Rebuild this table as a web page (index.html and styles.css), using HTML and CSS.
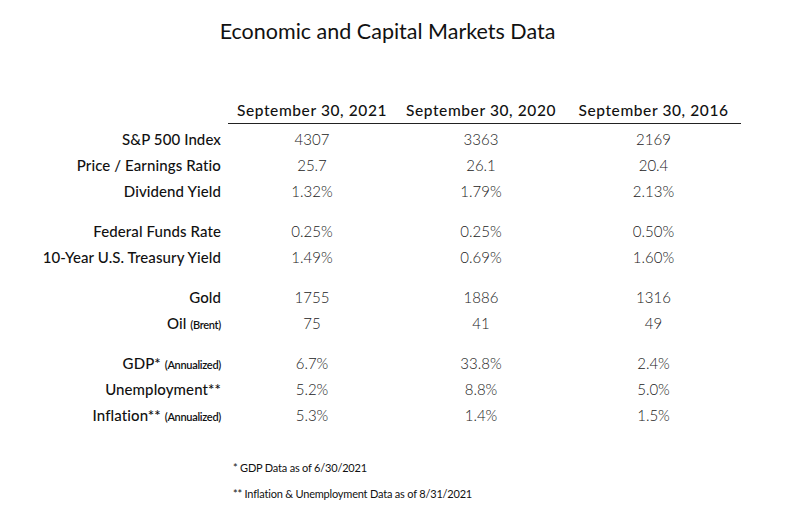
FILE: index.html
```html
<!DOCTYPE html>
<html>
<head>
<meta charset="utf-8">
<link rel="stylesheet" href="styles.css">
</head>
<body>
<div class="page">
  <h1 class="title">Economic and Capital Markets Data</h1>
  <div class="table">
    <div class="head-row">
      <div class="label-cell"></div>
      <div class="head-cells">
        <div class="col">September 30, 2021</div>
        <div class="col">September 30, 2020</div>
        <div class="col">September 30, 2016</div>
      </div>
    </div>
    <div class="group">
      <div class="row"><div class="label-cell">S&amp;P 500 Index</div><div class="col val">4307</div><div class="col val">3363</div><div class="col val">2169</div></div>
      <div class="row"><div class="label-cell">Price / Earnings Ratio</div><div class="col val">25.7</div><div class="col val">26.1</div><div class="col val">20.4</div></div>
      <div class="row"><div class="label-cell">Dividend Yield</div><div class="col val">1.32%</div><div class="col val">1.79%</div><div class="col val">2.13%</div></div>
    </div>
    <div class="group">
      <div class="row"><div class="label-cell">Federal Funds Rate</div><div class="col val">0.25%</div><div class="col val">0.25%</div><div class="col val">0.50%</div></div>
      <div class="row"><div class="label-cell">10-Year U.S. Treasury Yield</div><div class="col val">1.49%</div><div class="col val">0.69%</div><div class="col val">1.60%</div></div>
    </div>
    <div class="group">
      <div class="row"><div class="label-cell">Gold</div><div class="col val">1755</div><div class="col val">1886</div><div class="col val">1316</div></div>
      <div class="row"><div class="label-cell">Oil <span class="small">(Brent)</span></div><div class="col val">75</div><div class="col val">41</div><div class="col val">49</div></div>
    </div>
    <div class="group">
      <div class="row"><div class="label-cell">GDP* <span class="small">(Annualized)</span></div><div class="col val">6.7%</div><div class="col val">33.8%</div><div class="col val">2.4%</div></div>
      <div class="row"><div class="label-cell">Unemployment**</div><div class="col val">5.2%</div><div class="col val">8.8%</div><div class="col val">5.0%</div></div>
      <div class="row"><div class="label-cell">Inflation** <span class="small">(Annualized)</span></div><div class="col val">5.3%</div><div class="col val">1.4%</div><div class="col val">1.5%</div></div>
    </div>
  </div>
  <div class="notes">
    <p>* GDP Data as of 6/30/2021</p>
    <p>** Inflation &amp; Unemployment Data as of 8/31/2021</p>
  </div>
</div>
</body>
</html>
```
FILE: styles.css
```css
* { box-sizing: border-box; }
body {
  margin: 0;
  background: #fff;
  font-family: "Lato", "Noto Sans", sans-serif;
  color: #111;
}
.page {
  width: 789px;
  height: 532px;
  padding-top: 18px;
}
.title {
  margin: 0;
  text-align: center;
  font-size: 21.5px;
  font-weight: 400;
  line-height: 26px;
  padding-right: 14px;
  color: #111;
}
.table {
  margin-top: 55px;
  display: flex;
  flex-direction: column;
}
.head-row, .row {
  display: flex;
  align-items: center;
}
.label-cell {
  width: 228px;
  padding-right: 7px;
  text-align: right;
  font-size: 15px;
  font-weight: 500;
  letter-spacing: 0.1px;
  white-space: nowrap;
}
.head-cells {
  display: flex;
  border-bottom: 1px solid #222;
  width: 513px;
  padding-bottom: 2px;
}
.head-row .col {
  font-size: 15.5px;
  font-weight: 500;
  letter-spacing: 0.6px;
  line-height: 22px;
}
.col {
  text-align: center;
}
.row .col:nth-child(2), .head-cells .col:nth-child(1) { width: 168px; }
.row .col:nth-child(3), .head-cells .col:nth-child(2) { width: 170px; }
.row .col:nth-child(4), .head-cells .col:nth-child(3) { width: 175px; }
.row {
  height: 26px;
}
.val {
  font-size: 15px;
  font-weight: 300;
  color: #222;
}
.group {
  display: flex;
  flex-direction: column;
  margin-top: 2px;
}
.group + .group {
  margin-top: 14px;
}
.small {
  font-size: 11px;
  font-weight: 600;
  letter-spacing: -0.3px;
}
.notes {
  margin-top: 33px;
  padding-left: 233px;
  font-size: 11px;
  font-weight: 400;
  letter-spacing: -0.2px;
  color: #111;
}
.notes p {
  margin: 0 0 12px 0;
  line-height: 14px;
}
```
